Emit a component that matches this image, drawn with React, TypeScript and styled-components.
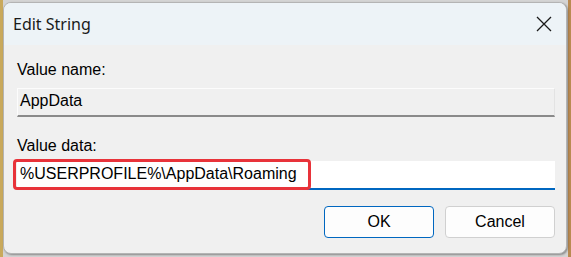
import React from "react";
import styled, { createGlobalStyle } from "styled-components";

const Global = createGlobalStyle`
  html, body { margin: 0; padding: 0; }
  body {
    width: 571px;
    height: 257px;
    overflow: hidden;
    background: linear-gradient(90deg, #c9a95c 0 3px, #d4d4d4 3px calc(100% - 3px), #b98a52 calc(100% - 3px));
    font-family: "Liberation Sans", Arial, sans-serif;
  }
`;

const Desk = styled.div`
  box-sizing: border-box;
  width: 571px;
  height: 257px;
  padding: 2px 4px 3px 3px;
`;

const Window = styled.div`
  box-sizing: border-box;
  height: 252px;
  display: flex;
  flex-direction: column;
  background: #f0f0f0;
  border: 1px solid #b4b4b4;
  border-radius: 8px;
  overflow: hidden;
  box-shadow: 1px 1px 2px rgba(0, 0, 0, 0.35);
`;

const TitleBar = styled.div`
  height: 42px;
  flex: none;
  display: flex;
  align-items: center;
  justify-content: space-between;
  padding: 0 14px 0 9px;
  background: #edf3f7;
`;

const Title = styled.span`
  font-family: "Noto Sans", "Open Sans", sans-serif;
  font-size: 16px;
  color: #1a1a1a;
`;

const CloseIcon = styled.svg`
  width: 16px;
  height: 16px;
  stroke: #1a1a1a;
  stroke-width: 1.3;
  fill: none;
`;

const Body = styled.div`
  flex: 1;
  display: flex;
  flex-direction: column;
  padding: 16px 11px 0 13px;
`;

const Label = styled.div<{ $gap: number }>`
  font-size: 16px;
  line-height: 18px;
  color: #000;
  margin-bottom: ${(p) => p.$gap}px;
`;

const ReadOnlyField = styled.div`
  box-sizing: border-box;
  height: 29px;
  padding: 0 0 2px 2px;
  display: flex;
  align-items: center;
  font-size: 16px;
  color: #000;
  background: #f0f0f0;
  border-top: 1px solid #fcfcfc;
  border-left: 1px solid #fcfcfc;
  border-right: 1px solid #e3e3e3;
  border-bottom: 2px solid #8a8a8a;
  margin-bottom: 20px;
`;

const EditWrap = styled.div`
  position: relative;
  height: 29px;
`;

const EditField = styled.div`
  box-sizing: border-box;
  height: 29px;
  padding: 0 0 1px 3px;
  display: flex;
  align-items: center;
  font-size: 16px;
  color: #000;
  background: #ffffff;
  border-bottom: 2px solid #0067c0;
`;

const Highlight = styled.div`
  position: absolute;
  left: -4px;
  top: -2px;
  width: 298px;
  height: 31px;
  box-sizing: border-box;
  border: 3px solid #e8333a;
  border-radius: 4px;
  pointer-events: none;
`;

const Buttons = styled.div`
  display: flex;
  justify-content: flex-end;
  gap: 11px;
  margin-top: 16px;
`;

const Button = styled.button<{ $primary?: boolean }>`
  box-sizing: border-box;
  width: 110px;
  height: 32px;
  font-family: "Liberation Sans", Arial, sans-serif;
  font-size: 16px;
  color: #000;
  background: #fdfdfd;
  border: 1px solid ${(p) => (p.$primary ? "#0067c0" : "#d0d0d0")};
  border-radius: 4px;
  padding: 0;
`;

export default function App() {
  return (
    <>
      <Global />
      <Desk>
        <Window>
          <TitleBar>
            <Title>Edit String</Title>
            <CloseIcon viewBox="0 0 16 16">
              <path d="M1 1 L15 15 M15 1 L1 15" />
            </CloseIcon>
          </TitleBar>
          <Body>
            <Label $gap={9}>Value name:</Label>
            <ReadOnlyField>AppData</ReadOnlyField>
            <Label $gap={6}>Value data:</Label>
            <EditWrap>
              <EditField>%USERPROFILE%\AppData\Roaming</EditField>
              <Highlight />
            </EditWrap>
            <Buttons>
              <Button $primary>OK</Button>
              <Button>Cancel</Button>
            </Buttons>
          </Body>
        </Window>
      </Desk>
    </>
  );
}
